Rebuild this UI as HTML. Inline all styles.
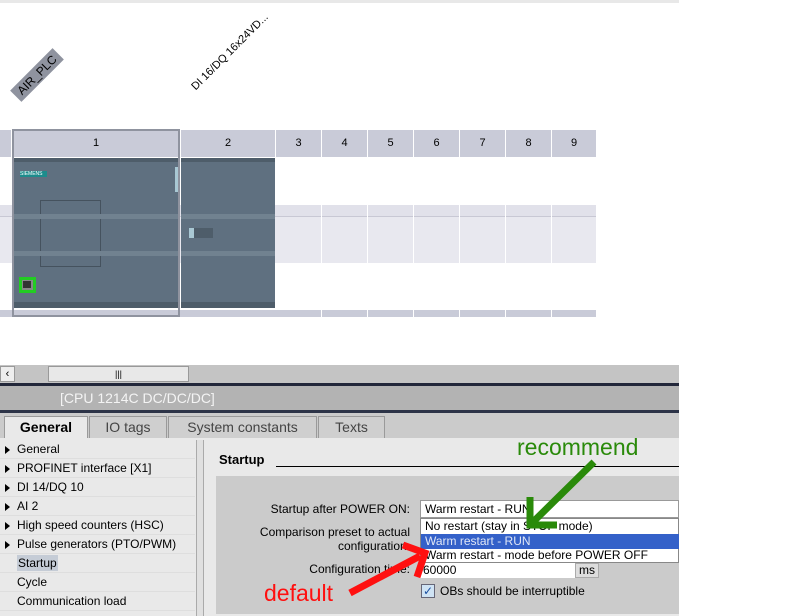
<!DOCTYPE html>
<html><head><meta charset="utf-8"><style>
*{margin:0;padding:0;box-sizing:border-box}
body{width:800px;height:616px;background:#fff;position:relative;overflow:hidden;font-family:"Liberation Sans","DejaVu Sans",sans-serif;font-size:12px;color:#000}
.a{position:absolute}
.hc{position:absolute;top:130px;height:27px;background:#c9cbd8;text-align:center;line-height:27px;font-size:11px}
.vl{position:absolute;top:130px;height:187px;width:1px;background:#fff}
.li{position:absolute;left:0;width:195px;height:19px;line-height:19px;padding-left:17px;font-size:12px;border-bottom:1px solid #dedede}
.li b{position:absolute;left:5px;top:6px;width:0;height:0;border-left:5px solid #000;border-top:4px solid transparent;border-bottom:4px solid transparent}
.tab{position:absolute;top:416px;height:22px;border:1px solid #9a9a9a;border-bottom:none;background:#cfcfcf;font-size:14px;line-height:20px;color:#444;text-align:center}
.lbl{position:absolute;font-size:12px;text-align:right}
</style></head><body>
<div class="a" style="left:0;top:0;width:679px;height:3px;background:#e8e8e8"></div>
<div class="a" style="left:37px;top:75px;width:0;height:0"><div style="position:absolute;transform:translate(-50%,-50%) rotate(-45deg);background:#8f939f;font-size:12px;padding:1px 5px;white-space:nowrap">AIR_PLC</div></div>
<div class="a" style="left:230px;top:52px;width:0;height:0"><div style="position:absolute;transform:translate(-50%,-50%) rotate(-45deg);font-size:11px;white-space:nowrap">DI 16/DQ 16x24VD...</div></div>
<!-- grid -->
<div class="a" style="left:0;top:157px;width:596px;height:48px;background:#fff"></div>
<div class="a" style="left:0;top:205px;width:596px;height:11px;background:#e1e1ea"></div>
<div class="a" style="left:0;top:216px;width:596px;height:1px;background:#c8c8d4"></div>
<div class="a" style="left:0;top:217px;width:596px;height:46px;background:#e8e8ef"></div>
<div class="a" style="left:0;top:263px;width:596px;height:47px;background:#fff"></div>
<div class="a" style="left:0;top:310px;width:596px;height:7px;background:#c9cbd8"></div>
<div class="hc" style="left:0;width:11px"></div>
<div class="hc" style="left:13px;width:166px">1</div>
<div class="hc" style="left:181px;width:94px">2</div>
<div class="hc" style="left:276px;width:45px">3</div>
<div class="hc" style="left:322px;width:45px">4</div>
<div class="hc" style="left:368px;width:45px">5</div>
<div class="hc" style="left:414px;width:45px">6</div>
<div class="hc" style="left:460px;width:45px">7</div>
<div class="hc" style="left:506px;width:45px">8</div>
<div class="hc" style="left:552px;width:44px">9</div>
<div class="vl" style="left:321px"></div><div class="vl" style="left:367px"></div><div class="vl" style="left:413px"></div><div class="vl" style="left:459px"></div><div class="vl" style="left:505px"></div><div class="vl" style="left:551px"></div>
<!-- CPU -->
<div class="a" style="left:12px;top:129px;width:168px;height:188px;border:2px solid #8f939f"></div>
<div class="a" style="left:14px;top:158px;width:164px;height:150px;background:#5f7080"></div>
<div class="a" style="left:14px;top:158px;width:164px;height:4px;background:#4e5d6a"></div>
<div class="a" style="left:14px;top:302px;width:164px;height:6px;background:#4e5d6a"></div>
<div class="a" style="left:20px;top:171px;width:27px;height:6px;background:#1d8c8c;font-size:5px;color:#fff;line-height:6px">SIEMENS</div>
<div class="a" style="left:40px;top:200px;width:61px;height:67px;border:1px solid #45525e"></div>
<div class="a" style="left:14px;top:214px;width:164px;height:5px;background:#718290"></div>
<div class="a" style="left:14px;top:251px;width:164px;height:5px;background:#718290"></div>
<div class="a" style="left:175px;top:167px;width:3px;height:25px;background:#a9c8d4"></div>
<div class="a" style="left:19px;top:277px;width:17px;height:16px;border:3px solid #22cc22;background:#888"></div>
<div class="a" style="left:23px;top:281px;width:8px;height:7px;background:#333"></div>
<!-- SM -->
<div class="a" style="left:181px;top:158px;width:94px;height:150px;background:#5f7080"></div>
<div class="a" style="left:181px;top:158px;width:94px;height:4px;background:#4e5d6a"></div>
<div class="a" style="left:181px;top:302px;width:94px;height:6px;background:#4e5d6a"></div>
<div class="a" style="left:181px;top:214px;width:94px;height:5px;background:#718290"></div>
<div class="a" style="left:181px;top:251px;width:94px;height:5px;background:#718290"></div>
<div class="a" style="left:189px;top:228px;width:24px;height:10px;background:#4e5d6a"></div>
<div class="a" style="left:189px;top:228px;width:5px;height:10px;background:#a9c8d4"></div>
<!-- scrollbar -->
<div class="a" style="left:0;top:365px;width:679px;height:18px;background:#c4c4c4"></div>
<div class="a" style="left:0;top:366px;width:15px;height:16px;background:#eee;border:1px solid #999;font-size:11px;text-align:center;line-height:14px">&lsaquo;</div>
<div class="a" style="left:48px;top:366px;width:141px;height:16px;background:#e8e8e8;border:1px solid #999;font-size:9px;text-align:center;line-height:14px">|||</div>
<div class="a" style="left:0;top:383px;width:679px;height:3px;background:#22273a"></div>
<div class="a" style="left:0;top:386px;width:679px;height:24px;background:#b3b3b3;color:#f4f4f4;font-size:14px;line-height:24px;padding-left:60px">[CPU 1214C DC/DC/DC]</div>
<div class="a" style="left:0;top:410px;width:679px;height:3px;background:#2d3448"></div>
<div class="a" style="left:0;top:413px;width:679px;height:25px;background:#cbcbcb"></div>
<div class="tab" style="left:4px;width:84px;top:416px;height:23px;background:#e9e9e9;color:#000;font-weight:bold">General</div>
<div class="tab" style="left:89px;width:78px">IO tags</div>
<div class="tab" style="left:168px;width:149px">System constants</div>
<div class="tab" style="left:318px;width:67px">Texts</div>
<div class="a" style="left:0;top:438px;width:679px;height:178px;background:#e9e9e9"></div>
<div class="li" style="top:440px"><b></b>General</div>
<div class="li" style="top:459px"><b></b>PROFINET interface [X1]</div>
<div class="li" style="top:478px"><b></b>DI 14/DQ 10</div>
<div class="li" style="top:497px"><b></b>AI 2</div>
<div class="li" style="top:516px"><b></b>High speed counters (HSC)</div>
<div class="li" style="top:535px"><b></b>Pulse generators (PTO/PWM)</div>
<div class="li" style="top:554px"><span style="background:#c5ccd6;padding:1px 1px">Startup</span></div>
<div class="li" style="top:573px">Cycle</div>
<div class="li" style="top:592px">Communication load</div>
<div class="a" style="left:196px;top:440px;width:8px;height:176px;background:#e0e0e0;border-left:1px solid #aaa;border-right:1px solid #aaa"></div>
<div class="a" style="left:219px;top:452px;font-weight:bold;font-size:13px">Startup</div>
<div class="a" style="left:276px;top:466px;width:403px;height:1px;background:#000"></div>
<div class="a" style="left:216px;top:476px;width:463px;height:138px;background:#cbcbcb"></div>
<div class="lbl" style="right:390px;top:502px">Startup after POWER ON:</div>
<div class="lbl" style="right:390px;top:525px;line-height:14px">Comparison preset to actual<br>configuration:</div>
<div class="lbl" style="right:390px;top:562px">Configuration time:</div>
<div class="a" style="left:420px;top:500px;width:259px;height:18px;background:#fff;border:1px solid #999;padding-left:4px;line-height:16px">Warm restart - RUN</div>
<div class="a" style="left:420px;top:518px;width:259px;height:45px;background:#fff;border:1px solid #888"></div>
<div class="a" style="left:425px;top:519px;line-height:14px">No restart (stay in STOP mode)</div>
<div class="a" style="left:421px;top:534px;width:258px;height:15px;background:#3461c9;color:#dfe6f6;padding-left:4px;line-height:15px">Warm restart - RUN</div>
<div class="a" style="left:425px;top:548px;line-height:14px">Warm restart - mode before POWER OFF</div>
<div class="a" style="left:420px;top:563px;width:156px;height:15px;background:#fff;line-height:15px;padding-left:3px">60000</div>
<div class="a" style="left:575px;top:563px;width:24px;height:15px;background:#ddd;border:1px solid #aaa;line-height:13px;padding-left:3px">ms</div>
<div class="a" style="left:421px;top:584px;width:14px;height:14px;background:#cfe3f4;border:1px solid #667;color:#1a4fa0;font-size:12px;line-height:12px;text-align:center;font-weight:bold">&#10003;</div>
<div class="a" style="left:440px;top:584px">OBs should be interruptible</div>
<svg class="a" style="left:0;top:0" width="800" height="616">
<g stroke="#2a8a0a" stroke-width="7" fill="none" stroke-linecap="butt">
<line x1="594" y1="462" x2="532" y2="523"/>
<polyline points="530,497 530,525 557,525"/>
</g>
<g stroke="#ff1010" stroke-width="7" fill="none">
<line x1="350" y1="593" x2="420" y2="556"/>
<polyline points="403,545 425,553 417,577"/>
</g>
<text x="517" y="455" fill="#2a8a0a" font-size="23" font-family="Liberation Sans,sans-serif">recommend</text>
<text x="264" y="601" fill="#ff1010" font-size="23" font-family="Liberation Sans,sans-serif">default</text>
</svg>
</body></html>
